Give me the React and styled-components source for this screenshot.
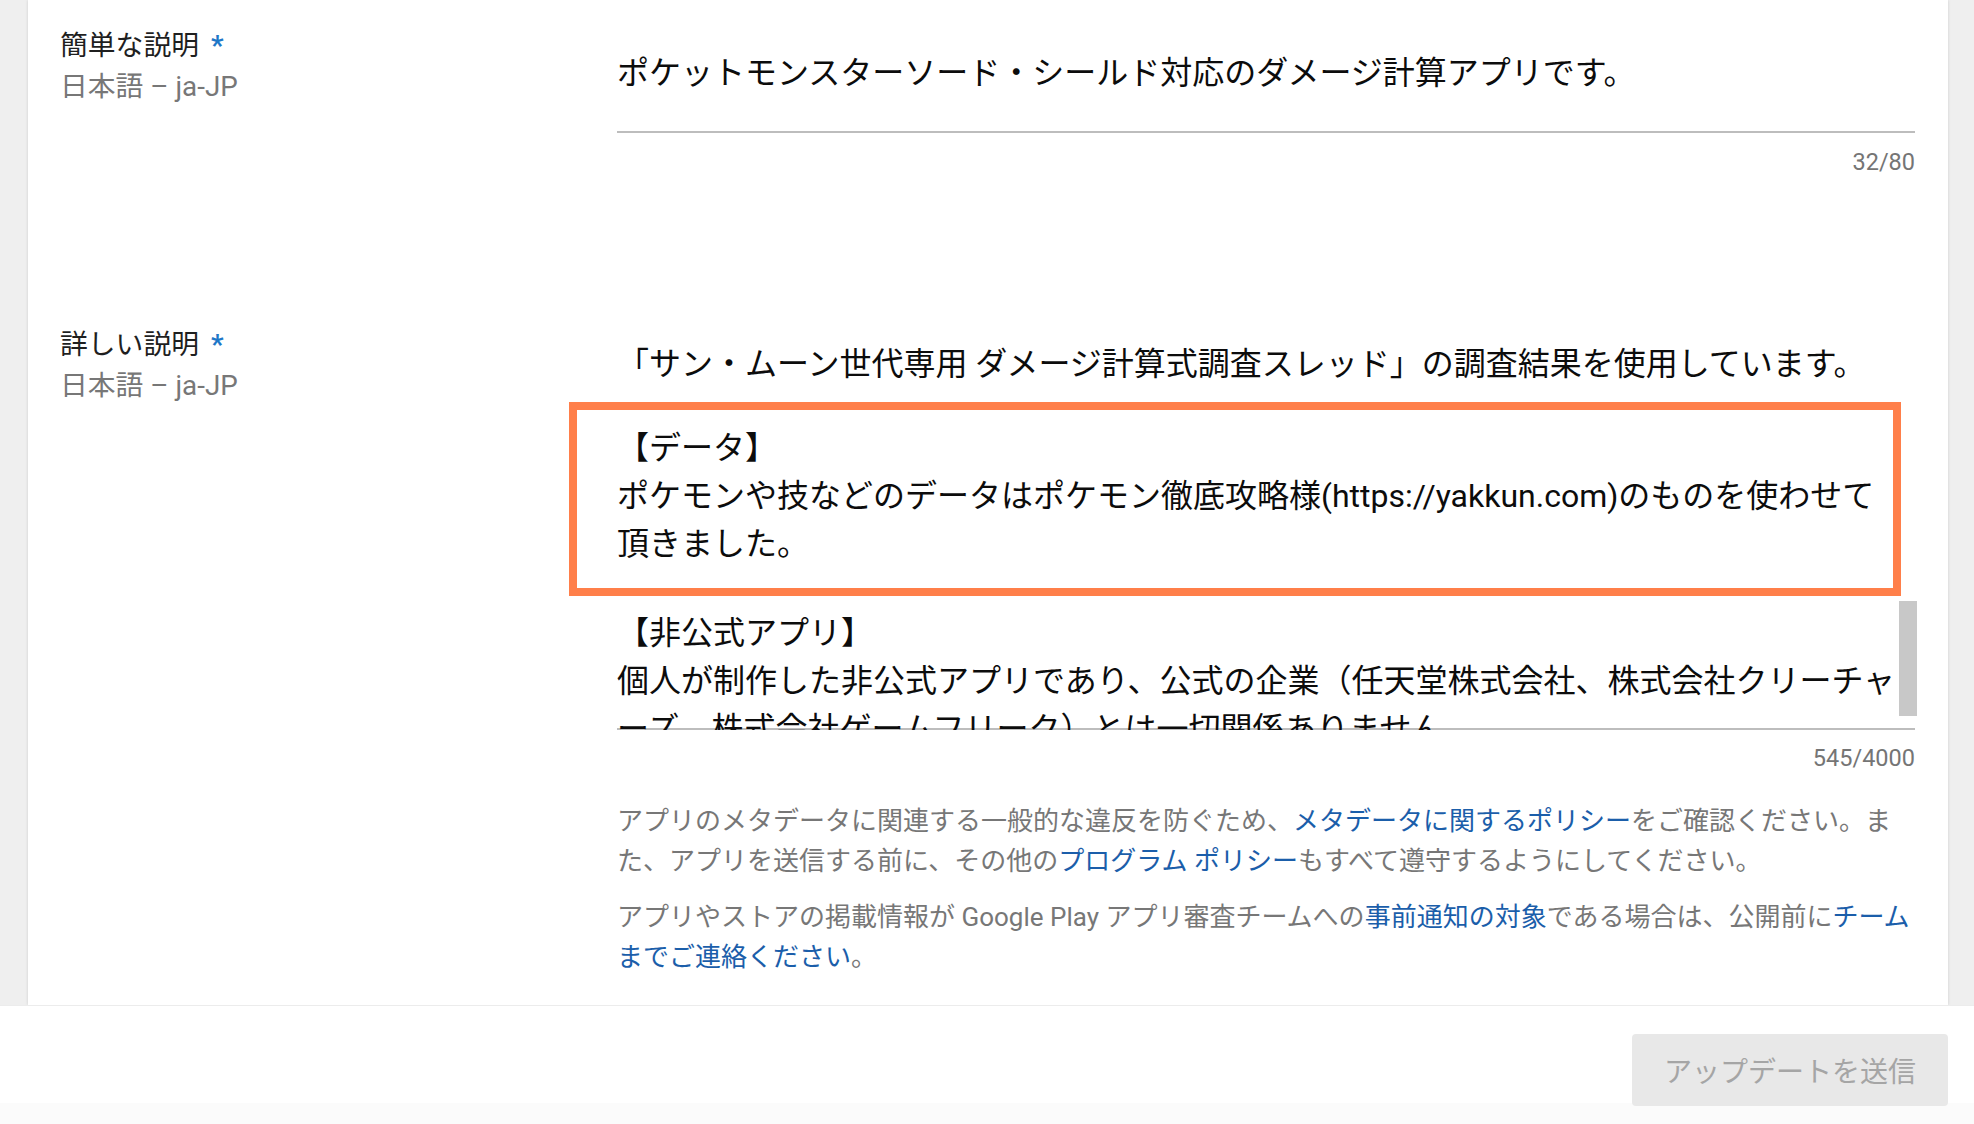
import React from "react"
import styled, { createGlobalStyle } from "styled-components"

const GlobalStyle = createGlobalStyle`
    html, body {
        margin: 0;
        padding: 0;
        background: #ffffff;
    }
    body {
        font-family: Roboto, "Noto Sans CJK JP", sans-serif;
        color: #202124;
    }
`

const Page = styled.div`
    display: flex;
    flex-direction: column;
    height: 1124px;
    overflow: hidden;
`

const Main = styled.div`
    flex: 1;
    display: flex;
    background-color: #efefef;
    padding: 0 26px 0 28px;
    overflow: hidden;
`

const Card = styled.section`
    flex: 1;
    background-color: #ffffff;
    box-shadow: 0 0 3px rgba(0, 0, 0, 0.14);
    padding: 25px 33px 0 32px;
`

const Row = styled.div`
    display: grid;
    grid-template-columns: 557px 1fr;
    margin-top: ${props => props.$top || 0}px;
`

const Label = styled.div`
    font-size: 27.8px;
    line-height: 41px;
    color: #1f1f1f;
`

const Required = styled.span`
    color: #1e78c8;
    margin-left: 12px;
    font-weight: 700;
`

const Locale = styled.div`
    color: #777777;
`

const Field = styled.div`
    display: flex;
    flex-direction: column;
`

const Input = styled.div`
    font-size: 32px;
    line-height: 48px;
    color: #0c0c0c;
    padding: 24px 0 34px;
    border-bottom: 2px solid #bdbdbd;
`

const TextArea = styled.div`
    position: relative;
    margin-top: 16px;
    height: 388px;
    padding-right: 18px;
    font-size: 32px;
    line-height: 48px;
    color: #0c0c0c;
    border-bottom: 2px solid #bdbdbd;
    clip-path: inset(0 -80px 0 -80px);
`

const Highlight = styled.div`
    margin: 14px -4px 0 -48px;
    border: 8px solid #ff7f4a;
    padding: 14px 0 20px 40px;
    white-space: nowrap;
`

const Para = styled.div`
    margin-top: ${props => props.$top || 0}px;
    white-space: nowrap;
`

const Thumb = styled.div`
    position: absolute;
    right: -2px;
    top: 261px;
    width: 18px;
    height: 115px;
    background-color: #c8c8c8;
`

const Counter = styled.div`
    margin-top: ${props => props.$top}px;
    text-align: right;
    font-size: 23.5px;
    line-height: 30px;
    color: #757575;
`

const Help = styled.div`
    margin-top: 28px;
    font-size: 26px;
    line-height: 40px;
    color: #777777;

    p {
        margin: 0 0 16px;
    }
`

const Link = styled.a`
    color: #1b5eaa;
    text-decoration: none;
`

const Footer = styled.footer`
    height: 119px;
    box-sizing: border-box;
    border-top: 1px solid #ececec;
    background: linear-gradient(#ffffff 97px, #fbfbfb 97px);
    display: flex;
    justify-content: flex-end;
    align-items: flex-start;
    padding: 28px 26px 0 0;
`

const SubmitButton = styled.button`
    width: 316px;
    height: 72px;
    border: none;
    border-radius: 4px;
    background-color: #e8e8e8;
    color: #a5a5a5;
    font-family: Roboto, "Noto Sans CJK JP", sans-serif;
    font-size: 28px;
    cursor: default;
`

const FieldLabel = ({ title }) => (
    <Label>
        {title}<Required>*</Required>
        <Locale>日本語 – ja-JP</Locale>
    </Label>
)

const App = () => {
    return (
        <Page>
            <GlobalStyle />
            <Main>
                <Card>
                    <Row>
                        <FieldLabel title="簡単な説明" />
                        <Field>
                            <Input>ポケットモンスターソード・シールド対応のダメージ計算アプリです。</Input>
                            <Counter $top={14}>32/80</Counter>
                        </Field>
                    </Row>

                    <Row $top={147}>
                        <FieldLabel title="詳しい説明" />
                        <Field>
                            <TextArea>
                                <Para>「サン・ムーン世代専用 ダメージ計算式調査スレッド」の調査結果を使用しています。</Para>
                                <Highlight>
                                    【データ】<br />
                                    ポケモンや技などのデータはポケモン徹底攻略様(https://yakkun.com)のものを使わせて<br />
                                    頂きました。
                                </Highlight>
                                <Para $top={13}>
                                    【非公式アプリ】<br />
                                    個人が制作した非公式アプリであり、公式の企業（任天堂株式会社、株式会社クリーチャ<br />
                                    ーズ、株式会社ゲームフリーク）とは一切関係ありません。
                                </Para>
                                <Thumb />
                            </TextArea>
                            <Counter $top={13}>545/4000</Counter>
                            <Help>
                                <p>
                                    アプリのメタデータに関連する一般的な違反を防ぐため、<Link href="#">メタデータに関するポリシー</Link>をご確認ください。ま<br />
                                    た、アプリを送信する前に、その他の<Link href="#">プログラム ポリシー</Link>もすべて遵守するようにしてください。
                                </p>
                                <p>
                                    アプリやストアの掲載情報が Google Play アプリ審査チームへの<Link href="#">事前通知の対象</Link>である場合は、公開前に<Link href="#">チーム</Link><br />
                                    <Link href="#">までご連絡ください</Link>。
                                </p>
                            </Help>
                        </Field>
                    </Row>
                </Card>
            </Main>
            <Footer>
                <SubmitButton>アップデートを送信</SubmitButton>
            </Footer>
        </Page>
    )
}

export default App
